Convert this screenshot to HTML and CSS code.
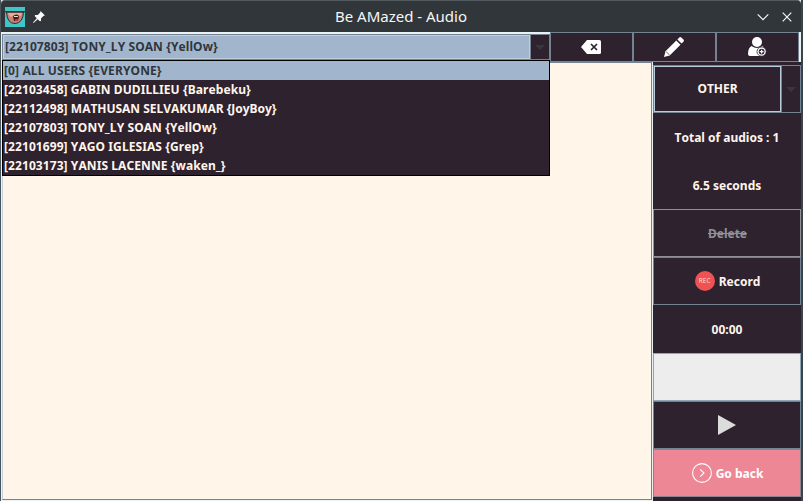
FILE: index.html
```html
<!DOCTYPE html>
<html lang="en">
<head>
<meta charset="utf-8">
<title>Be AMazed - Audio</title>
<link rel="stylesheet" href="styles.css">
</head>
<body>
<div class="window">
  <header class="titlebar">
    <svg class="app-icon" width="20" height="20" viewBox="0 0 20 20">
      <rect width="20" height="20" fill="#3fc6c6"/>
      <path d="M1.500 5Q2 16.500 10 16.500Q18 16 18.500 5Z" fill="#c68373" stroke="#3b2526"/>
      <path d="M3 6h14l-1 3-5-1-6 2z" fill="#e3ab99"/>
      <path d="M0 4.700h20" stroke="#263f43" stroke-width="1.400"/>
      <path d="M8 9q4-3 6 0l-1 5H9z" fill="#48151a"/>
      <path d="M9 9.500h4" stroke="#f1ddd4"/>
      <path d="M10 13h3" stroke="#d34c55" stroke-width="1.500"/>
    </svg>
    <svg class="pin" width="12" height="12" viewBox="0 0 12 12">
      <path d="M7.5 0 12 4.4 10.7 4.8 8.1 7.3 8 10 6.9 10.3 4.7 8.2.6 12 0 11.5 3.8 7.3 1.7 5.1 2.1 4.1 4.8 3.9 7.2 1.5Z" fill="#fcfcfc"/>
    </svg>
    <h1 class="title">Be AMazed - Audio</h1>
    <svg class="controls" width="36" height="12" viewBox="0 0 36 12" fill="none" stroke="#fcfcfc" stroke-width="1.1">
      <path d="M.7 3.3 6 8.6 11.3 3.3M25.7 1.7 34.3 10.3M34.3 1.7 25.7 10.3"/>
    </svg>
  </header>

  <div class="toolbar">
    <div class="combo">
      <div class="combo-value">[22107803] TONY_LY SOAN {YellOw}</div>
      <div class="combo-arrow"><i class="caret"></i></div>
      <ul class="popup">
        <li class="selected">[0] ALL USERS {EVERYONE}</li>
        <li>[22103458] GABIN DUDILLIEU {Barebeku}</li>
        <li><span>[22112498] </span><span class="tight">MATHUSAN SELVAKUMAR {JoyBoy}</span></li>
        <li>[22107803] TONY_LY SOAN {YellOw}</li>
        <li>[22101699] YAGO IGLESIAS {Grep}</li>
        <li>[22103173] YANIS LACENNE {waken_}</li>
      </ul>
    </div>
    <div class="tool">
      <svg width="20" height="14" viewBox="0 0 20 14"><path d="M6 0H18.5Q20 0 20 1.5V12.500Q20 14 18.500 14H6L0 7Z" fill="#fff"/><path d="M10 4 16 10M16 4 10 10" stroke="#2e222f" stroke-width="1.7"/></svg>
    </div>
    <div class="tool">
      <svg width="20" height="20" viewBox="0 0 20 20" fill="#fff"><path d="M12.300 3.500 16.500 7.700 5.700 18.400 0 20 1.500 14.300Z"/><path d="M13.400 2.400 15.200.6Q16.300-.4 17.400.6L19.400 2.600Q20.400 3.700 19.400 4.800L17.600 6.600Z"/><path d="M2 14.500 5.500 18" stroke="#2e222f" stroke-width=".7"/></svg>
    </div>
    <div class="tool last">
      <svg width="19" height="20" viewBox="0 0 19 20"><circle cx="9" cy="5" r="5" fill="#fff"/><path d="M3.500 9Q9 13 14.500 9Q17 11 17 14L12 19H2Q0 19 0 17Q0 11 3.500 9Z" fill="#fff"/><circle cx="13.600" cy="14.600" r="4.600" fill="#fff" stroke="#2e222f" stroke-width=".8"/><circle cx="13.600" cy="14.600" r="2.900" fill="#2e222f"/><path d="M13.600 12.700v3.800M11.700 14.600h3.800" stroke="#fff" stroke-width="1.300"/></svg>
    </div>
  </div>

  <div class="body">
    <main class="canvas"></main>
    <aside class="side">
      <div class="select">
        <div class="select-value">OTHER</div>
        <div class="select-arrow"><i class="caret"></i></div>
      </div>
      <div class="row">Total of audios : 1</div>
      <div class="row">6.5 seconds</div>
      <div class="row button disabled"><s>Delete</s></div>
      <div class="row button shifted"><span class="rec">REC</span>Record</div>
      <div class="row">00:00</div>
      <div class="row button wave"></div>
      <div class="row button"><svg width="18" height="20" viewBox="0 0 18 20"><path d="M0 0 18 10 0 20Z" fill="#dcdcdc"/></svg></div>
      <div class="row button back shifted"><svg class="go" width="20" height="20" viewBox="0 0 20 20" fill="none" stroke="#fff"><circle cx="10" cy="10" r="9.400" stroke-width="1.100"/><path d="M8.200 6.300 12 10 8.200 13.700" stroke-width="1.100"/></svg>Go back</div>
    </aside>
  </div>
</div>
</body>
</html>
```
FILE: styles.css
```css
* { box-sizing: border-box; }
body {
  margin: 0;
  background: #4b5157;
  color: #fff5ec;
  font: bold 12px/19px "Noto Sans", sans-serif;
  font-kerning: none;
  overflow: hidden;
}
svg { display: block; flex: none; }
.window {
  width: 803px;
  height: 501px;
  display: flex;
  flex-direction: column;
  border-left: 1px solid #4c565d;
  border-right: 2px solid #3a444b;
  background: #e9f1f5;
}
.titlebar {
  height: 32px;
  flex: none;
  display: flex;
  align-items: center;
  background: #31363b;
  border-top: 1px solid #545b60;
  border-radius: 4px 4px 0 0;
  padding: 0 8px 0 4px;
}
.pin { margin-left: 8px; }
.title {
  flex: 1;
  margin: 0;
  text-align: center;
  font-size: 15px;
  font-weight: 400;
  font-kerning: normal;
  line-height: 28px;
  padding-bottom: 2px;
  color: #f6f7f7;
}
.toolbar {
  height: 30px;
  flex: none;
  display: flex;
  padding: 0 2px 0 1px;
}
.combo {
  position: relative;
  width: 548px;
  height: 26px;
  margin-top: 2px;
  display: flex;
  border: 1px solid #738392;
  letter-spacing: 0.08px;
}
.combo-value {
  flex: 1;
  background: #a1b6cd;
  border: 1px solid #bdd0df;
  color: #30363c;
  padding: 1px 0 0 1px;
}
.combo-arrow {
  width: 19px;
  border-left: 1px solid #738392;
  background: #2e222f;
  display: flex;
  align-items: center;
  justify-content: center;
}
.caret {
  border: 5px solid transparent;
  border-top-color: #38363c;
  border-bottom: 0;
}
.popup {
  position: absolute;
  z-index: 1;
  top: 25px;
  left: -1px;
  width: 548px;
  margin: 0;
  padding: 0;
  list-style: none;
  border: 1px solid #000;
  background: #2e222f;
}
.popup li { padding-left: 1px; }
.popup .selected { background: #a1b6cd; color: #30363c; letter-spacing: 0.12px; }
.tight { letter-spacing: -0.03px; }
.tool {
  width: 83px;
  flex: none;
  display: flex;
  align-items: center;
  justify-content: center;
  padding-right: 2px;
  background: #2e222f;
  border: 1px solid #738392;
}
.last { padding-right: 0; }
.body {
  flex: 1;
  display: flex;
  padding-left: 1px;
}
.canvas {
  width: 650px;
  margin-bottom: 1px;
  background: #fff6e9;
  border: 1px solid #738392;
  border-left-color: #c4d3dc;
}
.side {
  flex: 1;
  margin-left: 1px;
  padding-top: 3px;
  background: #2e222f;
}
.select, .row { height: 48px; display: flex; align-items: center; justify-content: center; }
.select { border: 1px solid #738392; align-items: stretch; }
.select-value {
  width: 127px;
  border: 1px solid #b5cddc;
  display: flex;
  align-items: center;
  justify-content: center;
  padding-bottom: 2px;
}
.select-arrow {
  flex: 1;
  border-left: 1px solid #738392;
  display: flex;
  align-items: center;
  justify-content: center;
}
.button { border: 1px solid #738392; }
.shifted { padding-left: 1px; }
.disabled { color: #929094; border-color: #929094; padding-left: 1px; }
.wave { background: #ededed; border-color: #8fa5b8; }
.back { background: #ed8796; border-color: #8b8490; color: #fff; }
.rec {
  width: 20px;
  height: 20px;
  margin-right: 4px;
  border-radius: 50%;
  background: #ee5253;
  color: #ffd6d6;
  font-size: 6.5px;
  font-weight: 400;
  line-height: 20px;
  text-align: center;
}
.go { margin-right: 4px; }
```
